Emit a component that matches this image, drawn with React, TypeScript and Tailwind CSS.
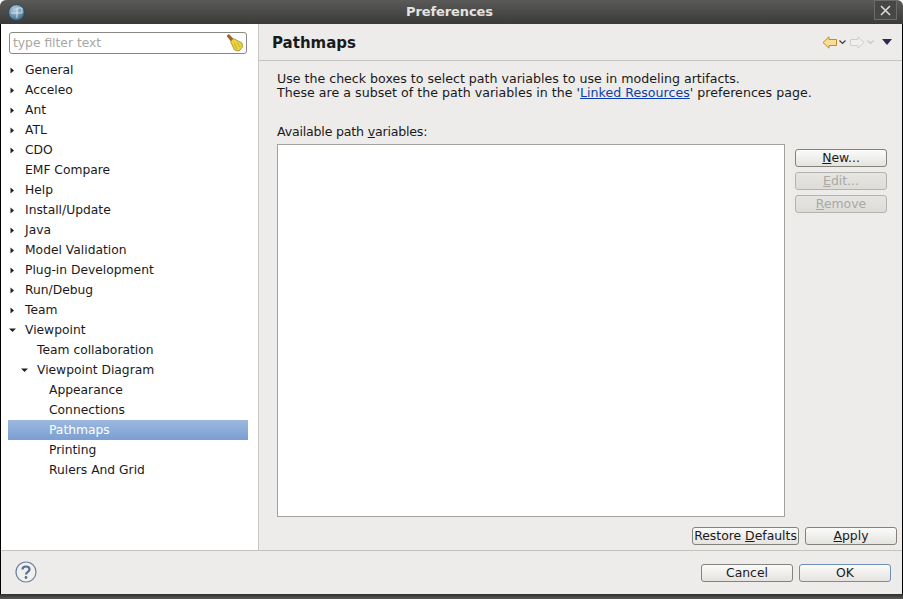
const font = { fontFamily: '"DejaVu Sans", sans-serif' };

type Row = { label: string; level: number; arrow?: 'right' | 'down'; selected?: boolean };

const rows: Row[] = [
  { label: 'General', level: 0, arrow: 'right' },
  { label: 'Acceleo', level: 0, arrow: 'right' },
  { label: 'Ant', level: 0, arrow: 'right' },
  { label: 'ATL', level: 0, arrow: 'right' },
  { label: 'CDO', level: 0, arrow: 'right' },
  { label: 'EMF Compare', level: 0 },
  { label: 'Help', level: 0, arrow: 'right' },
  { label: 'Install/Update', level: 0, arrow: 'right' },
  { label: 'Java', level: 0, arrow: 'right' },
  { label: 'Model Validation', level: 0, arrow: 'right' },
  { label: 'Plug-in Development', level: 0, arrow: 'right' },
  { label: 'Run/Debug', level: 0, arrow: 'right' },
  { label: 'Team', level: 0, arrow: 'right' },
  { label: 'Viewpoint', level: 0, arrow: 'down' },
  { label: 'Team collaboration', level: 1 },
  { label: 'Viewpoint Diagram', level: 1, arrow: 'down' },
  { label: 'Appearance', level: 2 },
  { label: 'Connections', level: 2 },
  { label: 'Pathmaps', level: 2, selected: true },
  { label: 'Printing', level: 2 },
  { label: 'Rulers And Grid', level: 2 },
];

const indents = ['pl-[1px]', 'pl-[13px]', 'pl-[25px]'];

function TreeRow({ row }: { row: Row }) {
  return (
    <div
      className={`flex h-5 items-center ${indents[row.level]} ${
        row.selected ? 'bg-gradient-to-b from-[#9bb8e0] to-[#7c9fd0] text-white' : 'text-[#1a1a1a]'
      }`}
    >
      <span className="flex w-4 shrink-0 justify-start">
        {row.arrow === 'right' && (
          <svg width="5" height="7" viewBox="0 0 5 7" className="ml-[1px]">
            <path d="M0.5 0.5 L4 3.5 L0.5 6.5 Z" fill="#222" />
          </svg>
        )}
        {row.arrow === 'down' && (
          <svg width="7" height="5" viewBox="0 0 7 5">
            <path d="M0 0.5 L7 0.5 L3.5 4 Z" fill="#222" />
          </svg>
        )}
      </span>
      <span className="whitespace-pre">{row.label}</span>
    </div>
  );
}

function Btn({
  children,
  disabled,
  focused,
  className,
}: {
  children: React.ReactNode;
  disabled?: boolean;
  focused?: boolean;
  className: string;
}) {
  return (
    <div
      className={`flex items-center justify-center whitespace-nowrap rounded-[3px] border bg-gradient-to-b text-[12.4px] ${
        disabled
          ? 'border-[#b5b3ae] from-[#e6e5e2] to-[#dedcd8] text-[#a9a8a5]'
          : focused
            ? 'border-[#6e8fb5] from-[#fbfbfa] to-[#e4e3df] text-[#1a1a1a]'
            : 'border-[#85827c] from-[#fbfbfa] to-[#e4e3df] text-[#1a1a1a]'
      } ${className}`}
    >
      {children}
    </div>
  );
}

function Broom() {
  return (
    <svg width="18" height="19" viewBox="0 0 18 19">
      <path d="M1 2 L3 0.5 L7.5 5.5 L5.5 7.5 Z" fill="#a8641c" stroke="#7a4510" strokeWidth="0.6" />
      <path d="M4.5 7.5 L7.5 4.5 L16 9 L16.5 13 L13 17 L8.5 16 Z" fill="#ecd23e" stroke="#9c8a1c" strokeWidth="0.8" />
      <path d="M8 9 L11 15 M11 8.5 L14 13" stroke="#b9a226" strokeWidth="0.7" />
    </svg>
  );
}

function BackArrow({ disabled }: { disabled?: boolean }) {
  return (
    <svg width="15" height="13" viewBox="0 0 15 13">
      <path
        d="M14.5 3.5 H7 V0.8 L1 6.5 L7 12.2 V9.5 H14.5 Z"
        fill={disabled ? '#f0efed' : '#f8dd94'}
        stroke={disabled ? '#cfcdc9' : '#c98a1e'}
        strokeWidth="1"
      />
    </svg>
  );
}

function SmallChevron({ color }: { color: string }) {
  return (
    <svg width="7" height="5" viewBox="0 0 7 5">
      <path d="M0.5 0.5 L3.5 3.5 L6.5 0.5" fill="none" stroke={color} strokeWidth="1.2" />
    </svg>
  );
}

export default function App() {
  return (
    <div style={font} className="flex h-[599px] w-[903px] flex-col overflow-hidden bg-white text-[12.6px] leading-[14px]">
      <div className="flex h-[24px] shrink-0 justify-between rounded-t-[6px] bg-gradient-to-b from-[#5a5a58] to-[#3a3a38] pl-[8px] pr-[6px]">
        <svg width="17" height="17" viewBox="0 0 17 17" className="mt-[4px]">
          <defs>
            <radialGradient id="globe" cx="0.4" cy="0.3" r="0.8">
              <stop offset="0" stopColor="#b5d0e0" />
              <stop offset="1" stopColor="#2f5f80" />
            </radialGradient>
          </defs>
          <circle cx="8.5" cy="8.5" r="8" fill="url(#globe)" stroke="#27475c" />
          <path d="M3 9 H9 M9 4 H14 V9 H9 Z M9 9 V14" fill="none" stroke="#e6eef3" strokeWidth="1" opacity="0.85" />
        </svg>
        <span className="mt-[5px] text-[13px] font-bold tracking-[-0.1px] text-[#e4e3e0]">Preferences</span>
        <div className="flex h-[20px] w-[23px] items-center justify-center border border-[#6c6c6a] bg-[#474745]">
          <svg width="11" height="11" viewBox="0 0 11 11">
            <path d="M1 1 L10 10 M10 1 L1 10" stroke="#dddcd9" strokeWidth="1.6" />
          </svg>
        </div>
      </div>

      <div className="flex min-h-0 flex-1 flex-col border-x border-black">
        <div className="flex min-h-0 flex-1">
          <div className="flex w-[258px] shrink-0 flex-col border-r border-[#c8c7c3] bg-white pl-[7px] pr-[10px] text-[12.3px]">
            <div className="mx-[1px] mt-[8px] flex h-[22px] items-center justify-between rounded-[3px] border border-[#8a8883] bg-white pl-[3px] pr-[2px]">
              <span className="text-[#a8a7a3]">type filter text</span>
              <Broom />
            </div>
            <div className="mt-[6px]">
              {rows.map((row) => (
                <TreeRow key={row.label} row={row} />
              ))}
            </div>
          </div>

          <div className="flex min-w-0 flex-1 flex-col bg-[#edecea] text-[#1a1a1a]">
            <div className="flex h-[37px] shrink-0 items-center justify-between border-b border-[#c4c3bf] pl-[13px] pr-[10px]">
              <span className="pt-[1px] text-[15px] font-bold">Pathmaps</span>
              <div className="flex items-center">
                <BackArrow />
                <span className="ml-[2px] mr-[4px]">
                  <SmallChevron color="#3c3c3c" />
                </span>
                <span className="-scale-x-100">
                  <BackArrow disabled />
                </span>
                <span className="ml-[2px] mr-[8px]">
                  <SmallChevron color="#c6c5c1" />
                </span>
                <svg width="10" height="6" viewBox="0 0 10 6">
                  <path d="M0 0 H10 L5 6 Z" fill="#2c2c50" />
                </svg>
              </div>
            </div>

            <div className="flex min-h-0 flex-1 flex-col pl-[18px] pr-[5px]">
              <p className="mt-[11px]">Use the check boxes to select path variables to use in modeling artifacts.</p>
              <p className="tracking-[0.02px]">
                These are a subset of the path variables in the '
                <span className="text-[#0b3ea8] underline">Linked Resources</span>' preferences page.
              </p>
              <p className="mt-[25px] tracking-[-0.2px]">
                Available path <span className="underline">v</span>ariables:
              </p>
              <div className="mt-[5px] flex min-h-0">
                <div className="h-[373px] w-[508px] shrink-0 border border-[#a3a19c] bg-white" />
                <div className="ml-[10px] flex flex-col gap-[5px] pt-[5px]">
                  <Btn className="h-[18px] w-[92px]">
                    <span>
                      <span className="underline">N</span>ew...
                    </span>
                  </Btn>
                  <Btn disabled className="h-[18px] w-[92px]">
                    <span>
                      <span className="underline">E</span>dit...
                    </span>
                  </Btn>
                  <Btn disabled className="h-[18px] w-[92px]">
                    <span>
                      <span className="underline">R</span>emove
                    </span>
                  </Btn>
                </div>
              </div>
              <div className="mt-[10px] flex justify-end gap-[6px]">
                <Btn className="h-[18px] w-[107px]">
                  <span>
                    Restore <span className="underline">D</span>efaults
                  </span>
                </Btn>
                <Btn className="h-[18px] w-[92px]">
                  <span>
                    <span className="underline">A</span>pply
                  </span>
                </Btn>
              </div>
            </div>
          </div>
        </div>

        <div className="flex h-[44px] shrink-0 items-center justify-between border-t border-[#c4c3bf] bg-[#edecea] pb-[1px] pl-[14px] pr-[11px]">
          <svg width="22" height="22" viewBox="0 0 22 22">
            <circle cx="11" cy="11" r="10" fill="#f0f0ee" stroke="#6a7fa0" strokeWidth="1.2" />
            <path d="M7.5 8.5 C7.5 4.5 14.5 4.5 14.5 8.5 C14.5 11 11 10.8 11 13.5" fill="none" stroke="#5a6f92" strokeWidth="2.2" />
            <circle cx="11" cy="16.5" r="1.4" fill="#5a6f92" />
          </svg>
          <div className="mt-[2px] flex gap-[6px] text-[#1a1a1a]">
            <Btn className="h-[18px] w-[92px]">Cancel</Btn>
            <Btn focused className="h-[18px] w-[92px]">
              OK
            </Btn>
          </div>
        </div>
      </div>

      <div className="h-[5px] shrink-0 bg-gradient-to-b from-[#2e2e2c] to-[#5a5a58]" />
    </div>
  );
}
